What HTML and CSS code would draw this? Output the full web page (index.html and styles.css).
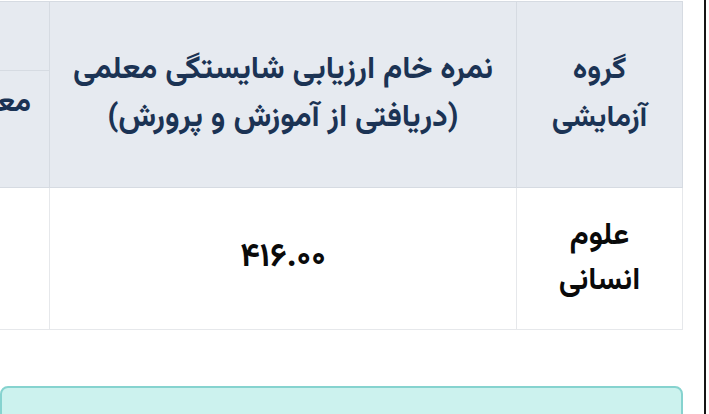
FILE: index.html
```html
<!DOCTYPE html>
<html lang="fa" dir="rtl">
<head>
<meta charset="utf-8">
<link rel="stylesheet" href="styles.css">
</head>
<body>
<div class="page">
  <div class="content">
    <div class="table-wrap">
      <table class="scores">
        <thead>
          <tr class="row-top">
            <th rowspan="2" class="col-group">گروه<br>آزمایشی</th>
            <th rowspan="2" class="col-raw">نمره خام ارزیابی شایستگی معلمی<br>(دریافتی از آموزش و پرورش)</th>
            <th colspan="2" class="col-more"></th>
          </tr>
          <tr class="row-sub">
            <th class="col-sub">معدل کتبی</th>
            <th class="col-sub2"></th>
          </tr>
        </thead>
        <tbody>
          <tr class="row-data">
            <td class="cell-group">علوم<br>انسانی</td>
            <td class="cell-raw">۴۱۶.۰۰</td>
            <td class="cell-sub"></td>
            <td class="cell-sub2"></td>
          </tr>
        </tbody>
      </table>
    </div>
    <div class="notice"></div>
  </div>
  <div class="edge"></div>
</div>
</body>
</html>
```

FILE: styles.css
```css
html, body {
  margin: 0;
  padding: 0;
  background: #ffffff;
}
body {
  width: 709px;
  height: 414px;
  overflow: hidden;
  font-family: "Vazirmatn", "Noto Sans Arabic", "DejaVu Sans", sans-serif;
}
.page {
  display: flex;
  direction: ltr;
  width: 709px;
  height: 414px;
  overflow: hidden;
}
.content {
  flex: none;
  width: 683px;
  direction: rtl;
  display: flex;
  flex-direction: column;
}
.edge {
  flex: none;
  width: 2px;
  height: 414px;
  margin-left: 21px;
  background: #151515;
}
.table-wrap {
  flex: none;
  width: 683px;
  overflow: hidden;
  display: flex;
  justify-content: flex-start;
}
.scores {
  border-collapse: collapse;
  flex: none;
  margin-top: 1px;
}
.scores th,
.scores td {
  border: 1px solid #d6dbe2;
  padding: 0;
  text-align: center;
  vertical-align: middle;
}
.scores th {
  background: #e6eaf0;
  color: #1b3354;
  font-weight: 700;
  font-size: 30px;
  line-height: 48px;
}
.scores td {
  background: #fff;
  color: #0a0a0a;
  font-weight: 700;
  font-size: 31px;
  line-height: 45px;
  border-color: #e6e8eb;
}
.scores th.col-group { width: 165px; }
.scores th.col-raw { width: 466px; font-size: 31.5px; }
.row-top th.col-more { height: 68px; }
.row-sub th { height: 107px; }
.scores th.col-sub {
  width: 200px;
  text-align: right;
  vertical-align: top;
  padding-top: 9px;
  padding-right: 18px;
  white-space: nowrap;
}
.scores th.col-sub2 { width: 100px; }
.row-data td { height: 141px; }
.scores td.cell-raw { font-size: 33px; }
.notice {
  flex: none;
  width: 683px;
  height: 40px;
  margin-top: 56px;
  box-sizing: border-box;
  background: #ccf2ee;
  border: 2px solid #86d3cf;
  border-radius: 8px;
}
```
